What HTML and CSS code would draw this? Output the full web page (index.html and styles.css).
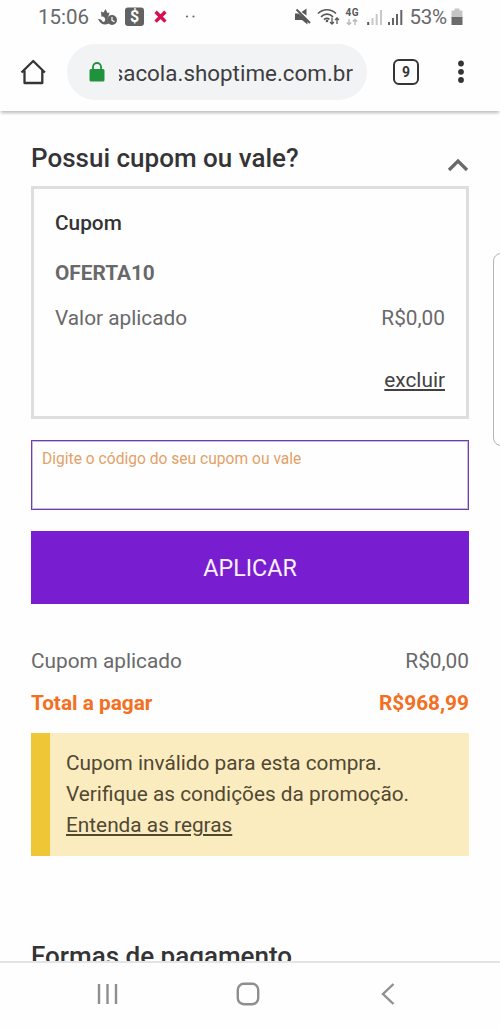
FILE: index.html
```html
<!DOCTYPE html>
<html lang="pt-BR">
<head>
<meta charset="utf-8">
<title>Sacola</title>
<link rel="stylesheet" href="styles.css">
</head>
<body>
<div class="phone">
  <header class="status">
    <span class="clock">15:06</span>
    <svg class="status-left" width="110" height="36" viewBox="0 0 110 36">
      <g fill="#626264">
        <path d="M5 11.500 7.500 12.500 9.500 9 11.500 13 13.500 12.500 12.500 16C11 18 11 21 12.500 23.500C9 25.500 4.500 24.500 2 19C4.500 18.500 6 20.500 7 22C9 22 9.500 20 9 18.500C8.500 17 6.500 16 5.500 17Z"/>
        <circle cx="16" cy="20" r="5"/>
        <rect x="29" y="7.500" width="19" height="18.500" rx="3"/>
      </g>
      <path d="M16 17v3.300l2.500 1.500" fill="none" stroke="#fff" stroke-width="1.200"/>
      <text class="dollar" x="38.500" y="22.300" text-anchor="middle">$</text>
      <path d="m60.800 13 7.400 7.400M68.200 13l-7.400 7.400" stroke="#d80f51" stroke-width="3.400" stroke-linecap="square"/>
      <g fill="#68686a"><circle cx="91" cy="16.500" r="1.100"/><circle cx="97.500" cy="16.500" r="1.100"/></g>
    </svg>
    <svg class="status-right" width="114" height="36" viewBox="0 0 114 36">
      <g fill="#58585a">
        <path d="M0 13.500h3.500L12.500 20v4.500l-5.500-4.500H0Z"/><path d="m6.500 12 5-3.500v7Z"/>
      </g>
      <path d="m1.500 9.500 13.500 13.500" stroke="#58585a" stroke-width="2"/>
      <g fill="none" stroke="#58585a" stroke-width="1.700">
        <path d="M23 13.500c5-5 13-5 18 0M26 16.800c3.500-3.500 8.500-3.500 12 0M29 19.500c2-1.500 4-1.500 5.500 0"/>
        <path d="M37 17.500v6.500m-2-2 2 2 2-2M42 24v-6m-2 2 2-2 2 2" stroke-width="1.300"/>
      </g>
      <circle cx="32" cy="21" r="1.300" fill="#58585a"/>
      <text class="network" x="50.500" y="15.800" textLength="13">4G</text>
      <path d="M54 19v5.500m-2.200-2 2.200 2 2.200-2M60 25v-5.500m-2.200 2 2.200-2 2.200 2" fill="none" stroke="#b9b9bb" stroke-width="1.400"/>
      <path d="M73.200 22v3" stroke="#58585a" stroke-width="2"/>
      <path d="M77.500 18v7M81.700 14v11M86 10v15" stroke="#c8c8ca" stroke-width="2"/>
      <path d="M94 22v3M98 18v7M102 14v11M106.300 10v15" stroke="#646466" stroke-width="2"/>
    </svg>
    <span class="percent">53%</span>
    <svg class="battery" width="12" height="36" viewBox="0 0 12 36">
      <path d="M.500 10.500h3v-2h5v2h3V18H.500Z" fill="#c5c5c7"/><path d="M.500 17h11v8H.500Z" fill="#6b6b6d"/>
    </svg>
  </header>
  <div class="toolbar">
    <svg class="home" width="26" height="26" viewBox="0 0 26 26">
      <path d="M1.500 13.500 13.200 2l11.700 11.500M4.500 11.500V24h17.800V11.500" fill="none" stroke="#353537" stroke-width="2.300" stroke-linejoin="round"/>
    </svg>
    <div class="address">
      <svg width="16" height="20" viewBox="0 0 16 20">
        <rect x=".5" y="7" width="15" height="12.500" rx="1.500" fill="#1f923c"/>
        <path d="M4 8V5a4 4 0 0 1 8 0v3" fill="none" stroke="#1f923c" stroke-width="1.800"/>
      </svg>
      <div class="url"><span>sacola.shoptime.com.br</span></div>
    </div>
    <div class="tabs">9</div>
    <svg class="more" width="8" height="26" viewBox="0 0 8 26"><g fill="#343436"><circle cx="4" cy="4.500" r="2.900"/><circle cx="4" cy="12.800" r="2.900"/><circle cx="4" cy="21" r="2.900"/></g></svg>
  </div>
  <main class="page">
    <div class="heading">
      <h2 class="title">Possui cupom ou vale?</h2>
      <svg width="22" height="16" viewBox="0 0 22 16"><path d="m2 13 9-9 9 9" fill="none" stroke="#69696b" stroke-width="3.300"/></svg>
    </div>
    <section class="coupon">
      <h3 class="coupon-title">Cupom</h3>
      <div class="code">OFERTA10</div>
      <div class="row"><span>Valor aplicado</span><span>R$0,00</span></div>
      <a class="remove">excluir</a>
    </section>
    <div class="field">Digite o código do seu cupom ou vale</div>
    <div class="apply">APLICAR</div>
    <div class="row applied"><span>Cupom aplicado</span><span>R$0,00</span></div>
    <div class="row total"><span>Total a pagar</span><span>R$968,99</span></div>
    <div class="alert">
      <div>Cupom inválido para esta compra.</div>
      <div>Verifique as condições da promoção.</div>
      <div><a class="rules">Entenda as regras</a></div>
    </div>
    <h2 class="title payment">Formas de pagamento</h2>
    <div class="edge-handle"></div>
  </main>
  <nav class="navbar">
    <svg width="22" height="22" viewBox="0 0 22 22"><path d="M2 1v20M10.500 1v20M19 1v20" stroke="#8e8e90" stroke-width="2.400"/></svg>
    <svg width="24" height="24" viewBox="0 0 24 24"><rect x="1.800" y="1.800" width="20.400" height="20.400" rx="6" fill="none" stroke="#8e8e90" stroke-width="2.400"/></svg>
    <svg width="14" height="22" viewBox="0 0 14 22"><path d="M12.500 1 2 11l10.500 10" fill="none" stroke="#8e8e90" stroke-width="2.400"/></svg>
  </nav>
</div>
</body>
</html>
```
FILE: styles.css
```css
* { box-sizing: border-box; margin: 0; }
body { font-family: Roboto, sans-serif; background: #fefefe; }
svg { display: block; flex: none; }
.phone { display: flex; flex-direction: column; width: 500px; height: 1028px; overflow: hidden; }
.status { display: flex; flex: none; height: 36px; padding-left: 38px; line-height: 35px; font-size: 20.5px; color: #68686a; }
.clock { width: 58px; }
.dollar { font-family: Roboto, sans-serif; font-weight: 700; font-size: 16px; fill: #fff; }
.network { font-family: Roboto, sans-serif; font-weight: 700; font-size: 10px; fill: #58585a; }
.status-right { margin-left: 89px; }
.percent { width: 41px; margin-left: 0.500px; letter-spacing: -0.300px; }
.toolbar { display: flex; flex: none; align-items: center; height: 75px; padding: 0 35px 3px 20px; box-shadow: 0 3px 3px -1px #bcbcbc; }
.address { display: flex; align-items: center; width: 300px; height: 56px; margin-left: 21px; padding-left: 22px; border-radius: 28px; background: #f1f3f5; }
.url { display: flex; justify-content: flex-end; width: 234px; margin-left: 14px; overflow: hidden; font-size: 22.400px; line-height: 30px; padding-top: 2px; color: #3e3e42; }
.tabs { width: 26px; height: 26px; margin-left: 26px; border: 2.500px solid #353537; border-radius: 6px; text-align: center; font-size: 14px; line-height: 22px; font-weight: 700; color: #353537; }
.more { margin-left: auto; }
.page { position: relative; flex: none; height: 850px; padding: 32px 31px 0; overflow: hidden; font-size: 20.800px; line-height: 24px; color: #69696b; }
.heading { display: flex; justify-content: space-between; align-items: center; height: 43px; padding-bottom: 13px; }
.heading svg { margin-top: 14px; }
.title { font-size: 26px; line-height: 31px; font-weight: 500; color: #343436; white-space: nowrap; }
.coupon { height: 233px; padding: 22px 21px 0; border: 3px solid #dedede; }
.coupon-title { font-size: 20.800px; font-weight: 500; color: #343436; }
.code { margin-top: 26px; font-weight: 700; }
.row { display: flex; justify-content: space-between; }
.coupon .row { margin-top: 21px; }
.remove { display: block; width: fit-content; margin: 38px 0 0 auto; color: #414143; text-decoration: underline; text-underline-offset: 2px; }
.field { height: 70px; margin-top: 21px; padding: 7px 10px; border: 1px solid #6b3fae; box-shadow: inset 0 0 0 1px #c9b8e2; font-size: 15.600px; line-height: 22px; color: #e3a168; }
.apply { height: 73px; margin-top: 21px; background: #791dd0; color: #fbf2ff; text-align: center; font-size: 23.300px; line-height: 74px; }
.applied { margin-top: 45px; }
.total { margin-top: 18px; font-weight: 700; color: #f36f21; }
.alert { height: 123px; margin-top: 18px; padding: 15px 0 0 16px; border-left: 19px solid #efc635; background: #fbecc0; line-height: 31px; color: #514832; }
.rules { text-decoration: underline; text-underline-offset: 2px; }
.payment { margin-top: 85px; }
.edge-handle { position: absolute; left: 493px; top: 142px; width: 20px; height: 193px; border: 1px solid #b5b5b5; border-radius: 8px; background: #fefefe; }
.navbar { display: flex; flex: none; align-items: center; justify-content: space-between; height: 67px; padding: 0 105px 4px 97px; border-top: 2px solid #e4e4e4; }
.navbar svg:nth-child(2) { margin-right: 5px; }
```
